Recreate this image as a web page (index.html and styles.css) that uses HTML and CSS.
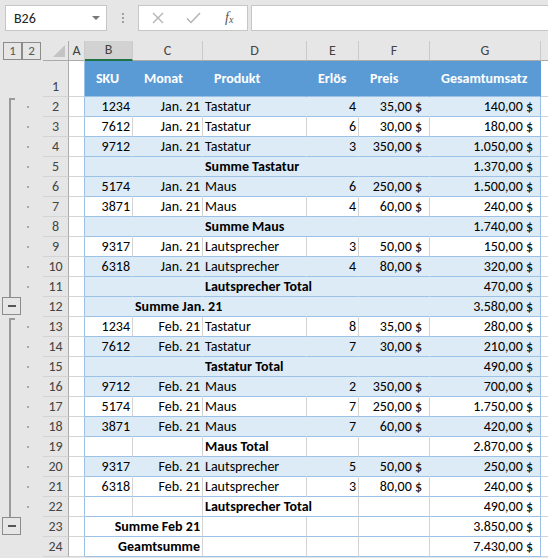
FILE: index.html
```html
<!DOCTYPE html>
<html>
<head>
  <title>Gesamtumsatz</title>
  <link rel="stylesheet" href="styles.css">
</head>
<body>
  <div class="formula-bar">
    <div class="name-box">
      <span>B26</span>
      <span class="caret"></span>
    </div>
    <div class="grip"><i></i><i></i><i></i></div>
    <div class="fx-box">
      <svg width="12" height="12" viewBox="0 0 12 12"><path d="M1 1 L11 11 M11 1 L1 11" stroke="#b4b4b4" stroke-width="1.4" fill="none"/></svg>
      <svg width="15" height="12" viewBox="0 0 15 12"><path d="M1 6.5 L5 10.5 L14 1" stroke="#b4b4b4" stroke-width="1.5" fill="none"/></svg>
      <span class="fx"><i>f</i><sub>x</sub></span>
    </div>
    <div class="formula-input"></div>
  </div>

  <div class="sheet">
    <!-- Gliederung links -->
    <div class="outline">
      <div class="outline-head">
        <div class="lvl">1</div>
        <div class="lvl">2</div>
      </div>
      <div class="outline-gap"></div>
      <div class="group">
        <div class="bracket"><div class="tick"></div></div>
        <div class="dots">
          <div class="dot-cell"><i class="dot"></i></div>
          <div class="dot-cell"><i class="dot"></i></div>
          <div class="dot-cell"><i class="dot"></i></div>
          <div class="dot-cell"><i class="dot"></i></div>
          <div class="dot-cell"><i class="dot"></i></div>
          <div class="dot-cell"><i class="dot"></i></div>
          <div class="dot-cell"><i class="dot"></i></div>
          <div class="dot-cell"><i class="dot"></i></div>
          <div class="dot-cell"><i class="dot"></i></div>
          <div class="dot-cell"><i class="dot"></i></div>
        </div>
      </div>
      <div class="minus-row"><div class="minus"><span></span></div></div>
      <div class="group">
        <div class="bracket"><div class="tick"></div></div>
        <div class="dots">
          <div class="dot-cell"><i class="dot"></i></div>
          <div class="dot-cell"><i class="dot"></i></div>
          <div class="dot-cell"><i class="dot"></i></div>
          <div class="dot-cell"><i class="dot"></i></div>
          <div class="dot-cell"><i class="dot"></i></div>
          <div class="dot-cell"><i class="dot"></i></div>
          <div class="dot-cell"><i class="dot"></i></div>
          <div class="dot-cell"><i class="dot"></i></div>
          <div class="dot-cell"><i class="dot"></i></div>
          <div class="dot-cell"><i class="dot"></i></div>
        </div>
      </div>
      <div class="minus-row"><div class="minus"><span></span></div></div>
    </div>

    <div class="grid">
      <div class="row col-head">
        <div class="ch corner"><svg width="12" height="12" viewBox="0 0 12 12"><polygon points="12,0 12,12 0,12" fill="#c4c4c4"/></svg></div>
        <div class="ch">A</div>
        <div class="ch sel">B</div>
        <div class="ch">C</div>
        <div class="ch">D</div>
        <div class="ch">E</div>
        <div class="ch">F</div>
        <div class="ch">G</div>
        <div class="ch last"></div>
      </div>

      <div class="row top">
        <div class="rh">1</div><div class="a"></div>
        <div class="c">SKU</div><div class="c">Monat</div><div class="c">Produkt</div>
        <div class="c">Erlös</div><div class="c">Preis</div><div class="c g">Gesamtumsatz</div>
        <div class="h"></div>
      </div>

      <div class="row band">
        <div class="rh">2</div><div class="a"></div>
        <div class="c r">1234</div><div class="c r">Jan. 21</div><div class="c">Tastatur</div>
        <div class="c r">4</div><div class="c r pad">35,00 $</div><div class="c r pad g">140,00 $</div>
        <div class="h"></div>
      </div>
      <div class="row">
        <div class="rh">3</div><div class="a"></div>
        <div class="c r">7612</div><div class="c r">Jan. 21</div><div class="c">Tastatur</div>
        <div class="c r">6</div><div class="c r pad">30,00 $</div><div class="c r pad g">180,00 $</div>
        <div class="h"></div>
      </div>
      <div class="row band">
        <div class="rh">4</div><div class="a"></div>
        <div class="c r">9712</div><div class="c r">Jan. 21</div><div class="c">Tastatur</div>
        <div class="c r">3</div><div class="c r pad">350,00 $</div><div class="c r pad g">1.050,00 $</div>
        <div class="h"></div>
      </div>
      <div class="row band">
        <div class="rh">5</div><div class="a"></div>
        <div class="c"></div><div class="c"></div><div class="c b span2">Summe Tastatur</div>
        <div class="c"></div><div class="c r pad g">1.370,00 $</div>
        <div class="h"></div>
      </div>
      <div class="row band">
        <div class="rh">6</div><div class="a"></div>
        <div class="c r">5174</div><div class="c r">Jan. 21</div><div class="c">Maus</div>
        <div class="c r">6</div><div class="c r pad">250,00 $</div><div class="c r pad g">1.500,00 $</div>
        <div class="h"></div>
      </div>
      <div class="row">
        <div class="rh">7</div><div class="a"></div>
        <div class="c r">3871</div><div class="c r">Jan. 21</div><div class="c">Maus</div>
        <div class="c r">4</div><div class="c r pad">60,00 $</div><div class="c r pad g">240,00 $</div>
        <div class="h"></div>
      </div>
      <div class="row band">
        <div class="rh">8</div><div class="a"></div>
        <div class="c"></div><div class="c"></div><div class="c b span2">Summe Maus</div>
        <div class="c"></div><div class="c r pad g">1.740,00 $</div>
        <div class="h"></div>
      </div>
      <div class="row">
        <div class="rh">9</div><div class="a"></div>
        <div class="c r">9317</div><div class="c r">Jan. 21</div><div class="c">Lautsprecher</div>
        <div class="c r">3</div><div class="c r pad">50,00 $</div><div class="c r pad g">150,00 $</div>
        <div class="h"></div>
      </div>
      <div class="row band">
        <div class="rh">10</div><div class="a"></div>
        <div class="c r">6318</div><div class="c r">Jan. 21</div><div class="c">Lautsprecher</div>
        <div class="c r">4</div><div class="c r pad">80,00 $</div><div class="c r pad g">320,00 $</div>
        <div class="h"></div>
      </div>
      <div class="row band">
        <div class="rh">11</div><div class="a"></div>
        <div class="c"></div><div class="c"></div><div class="c b span2">Lautsprecher Total</div>
        <div class="c"></div><div class="c r pad g">470,00 $</div>
        <div class="h"></div>
      </div>
      <div class="row band">
        <div class="rh">12</div><div class="a"></div>
        <div class="c"></div><div class="c b span2">Summe Jan. 21</div>
        <div class="c"></div><div class="c"></div><div class="c r pad g">3.580,00 $</div>
        <div class="h"></div>
      </div>
      <div class="row">
        <div class="rh">13</div><div class="a"></div>
        <div class="c r">1234</div><div class="c r">Feb. 21</div><div class="c">Tastatur</div>
        <div class="c r">8</div><div class="c r pad">35,00 $</div><div class="c r pad g">280,00 $</div>
        <div class="h"></div>
      </div>
      <div class="row band">
        <div class="rh">14</div><div class="a"></div>
        <div class="c r">7612</div><div class="c r">Feb. 21</div><div class="c">Tastatur</div>
        <div class="c r">7</div><div class="c r pad">30,00 $</div><div class="c r pad g">210,00 $</div>
        <div class="h"></div>
      </div>
      <div class="row band">
        <div class="rh">15</div><div class="a"></div>
        <div class="c"></div><div class="c"></div><div class="c b span2">Tastatur Total</div>
        <div class="c"></div><div class="c r pad g">490,00 $</div>
        <div class="h"></div>
      </div>
      <div class="row band">
        <div class="rh">16</div><div class="a"></div>
        <div class="c r">9712</div><div class="c r">Feb. 21</div><div class="c">Maus</div>
        <div class="c r">2</div><div class="c r pad">350,00 $</div><div class="c r pad g">700,00 $</div>
        <div class="h"></div>
      </div>
      <div class="row">
        <div class="rh">17</div><div class="a"></div>
        <div class="c r">5174</div><div class="c r">Feb. 21</div><div class="c">Maus</div>
        <div class="c r">7</div><div class="c r pad">250,00 $</div><div class="c r pad g">1.750,00 $</div>
        <div class="h"></div>
      </div>
      <div class="row band">
        <div class="rh">18</div><div class="a"></div>
        <div class="c r">3871</div><div class="c r">Feb. 21</div><div class="c">Maus</div>
        <div class="c r">7</div><div class="c r pad">60,00 $</div><div class="c r pad g">420,00 $</div>
        <div class="h"></div>
      </div>
      <div class="row">
        <div class="rh">19</div><div class="a"></div>
        <div class="c"></div><div class="c"></div><div class="c b">Maus Total</div>
        <div class="c"></div><div class="c"></div><div class="c r pad g">2.870,00 $</div>
        <div class="h"></div>
      </div>
      <div class="row band">
        <div class="rh">20</div><div class="a"></div>
        <div class="c r">9317</div><div class="c r">Feb. 21</div><div class="c">Lautsprecher</div>
        <div class="c r">5</div><div class="c r pad">50,00 $</div><div class="c r pad g">250,00 $</div>
        <div class="h"></div>
      </div>
      <div class="row">
        <div class="rh">21</div><div class="a"></div>
        <div class="c r">6318</div><div class="c r">Feb. 21</div><div class="c">Lautsprecher</div>
        <div class="c r">3</div><div class="c r pad">80,00 $</div><div class="c r pad g">240,00 $</div>
        <div class="h"></div>
      </div>
      <div class="row">
        <div class="rh">22</div><div class="a"></div>
        <div class="c"></div><div class="c"></div><div class="c b span2">Lautsprecher Total</div>
        <div class="c"></div><div class="c r pad g">490,00 $</div>
        <div class="h"></div>
      </div>
      <div class="row">
        <div class="rh">23</div><div class="a"></div>
        <div class="c b r span2">Summe Feb 21</div><div class="c"></div>
        <div class="c"></div><div class="c"></div><div class="c r pad g">3.850,00 $</div>
        <div class="h"></div>
      </div>
      <div class="row">
        <div class="rh">24</div><div class="a"></div>
        <div class="c b r span2">Geamtsumme</div><div class="c"></div>
        <div class="c"></div><div class="c"></div><div class="c r pad g">7.430,00 $</div>
        <div class="h"></div>
      </div>
    </div>
  </div>
</body>
</html>
```

FILE: styles.css
```css
body {
  margin: 0;
  background-color: #e6e6e6;
  font-family: Calibri, Carlito, Lato, sans-serif;
  font-size: 14px;
  color: #000;
  width: 548px;
  height: 558px;
  overflow: hidden;
}

/* Bearbeitungsleiste */
.formula-bar {
  display: flex;
  align-items: flex-start;
  height: 41px;
  padding: 5px 0 0 5px;
  box-sizing: border-box;
}

.name-box {
  width: 102px;
  height: 26px;
  box-sizing: border-box;
  border: 1px solid #c6c6c6;
  background-color: #fff;
  display: flex;
  align-items: center;
  justify-content: space-between;
  padding: 0 6px 0 8px;
  color: #222;
}

.caret {
  width: 0;
  height: 0;
  border-left: 4px solid transparent;
  border-right: 4px solid transparent;
  border-top: 4px solid #777;
}

.grip {
  width: 31px;
  height: 26px;
  display: flex;
  flex-direction: column;
  align-items: center;
  justify-content: center;
  gap: 2px;
}

.grip i {
  width: 2px;
  height: 2px;
  background-color: #a0a0a0;
}

.fx-box {
  width: 110px;
  height: 26px;
  box-sizing: border-box;
  border: 1px solid #c6c6c6;
  background-color: #fff;
  margin-right: 3px;
  display: flex;
  align-items: center;
  padding-left: 13px;
  gap: 22px;
}

.fx {
  font-family: "Liberation Serif", serif;
  color: #555;
  font-size: 14px;
  margin-left: 2px;
}

.fx sub {
  font-size: 10px;
  font-style: italic;
  vertical-align: baseline;
  position: relative;
  top: 1px;
}

.formula-input {
  flex: 1;
  height: 26px;
  box-sizing: border-box;
  border: 1px solid #c6c6c6;
  border-right: none;
  background-color: #fff;
}

.sheet {
  display: flex;
}

/* Gliederung */
.outline {
  width: 43px;
  flex-shrink: 0;
}

.outline-head {
  height: 20px;
  display: flex;
  padding: 1px 0 0 3px;
  box-sizing: border-box;
}

.lvl {
  width: 19px;
  height: 18px;
  box-sizing: border-box;
  border: 1px solid #8c8c8c;
  text-align: center;
  line-height: 16px;
  font-size: 13px;
  color: #555;
}

.outline-gap {
  height: 36px;
}

.group {
  height: 200px;
  display: flex;
}

.bracket {
  margin: 1px 0 0 9px;
  width: 4px;
  border-left: 2px solid #9a9a9a;
}

.tick {
  height: 2px;
  background-color: #9a9a9a;
}

.dots {
  margin-left: 12px;
  display: flex;
  flex-direction: column;
}

.dot-cell {
  height: 20px;
  display: flex;
  align-items: center;
}

.dot {
  width: 2px;
  height: 2px;
  background-color: #a8a8a8;
}

.minus-row {
  height: 20px;
  padding-left: 2px;
}

.minus {
  width: 19px;
  height: 18px;
  box-sizing: border-box;
  border: 1px solid #8c8c8c;
  display: flex;
  align-items: center;
  justify-content: center;
}

.minus span {
  width: 8px;
  height: 2px;
  background-color: #555;
}

/* Tabelle */
.grid {
  flex: 1;
}

.row {
  display: grid;
  grid-template-columns: 26px 16px 48px 70px 104px 52px 71px 111px 1fr;
  height: 20px;
}

.row > div {
  box-sizing: border-box;
  height: 100%;
  white-space: nowrap;
}

.ch {
  background-color: #e6e6e6;
  border-right: 1px solid #cacaca;
  border-bottom: 1px solid #ababab;
  text-align: center;
  line-height: 19px;
  color: #444;
}

.ch.sel {
  background-color: #d2d2d2;
  border-bottom: 2px solid #217346;
  line-height: 18px;
}

.ch.corner {
  border-right: 1px solid #ababab;
  display: flex;
  align-items: flex-end;
  justify-content: flex-end;
  padding: 0 3px 3px 0;
}

.ch.last {
  border-right: none;
}

.rh {
  background-color: #e6e6e6;
  border-right: 1px solid #ababab;
  border-bottom: 1px solid #d4d4d4;
  text-align: center;
  line-height: 19px;
  color: #444;
}

.a {
  background-color: #fff;
  border-right: 1px solid #9bc2e6;
  border-bottom: 1px solid #d4d4d4;
}

.h {
  background-color: #fff;
  border-bottom: 1px solid #d4d4d4;
}

.c {
  background-color: #fff;
  border-right: 1px solid #d4d4d4;
  border-bottom: 1px solid #9bc2e6;
  padding: 0 2px;
  line-height: 19px;
}

.band .c {
  background-color: #ddebf7;
  border-right-color: #ddebf7;
}

.c.g {
  border-right-color: #9bc2e6;
}

.row.top {
  height: 36px;
}

.top .rh {
  display: flex;
  align-items: flex-end;
  justify-content: center;
}

.top .c {
  background-color: #5b9bd5;
  border-right-color: #5b9bd5;
  color: #fff;
  font-weight: bold;
  padding-left: 11px;
  line-height: 35px;
}

.r {
  text-align: right;
}

.pad {
  padding-right: 7px !important;
}

.b {
  font-weight: bold;
}

.span2 {
  grid-column: span 2;
}
```
